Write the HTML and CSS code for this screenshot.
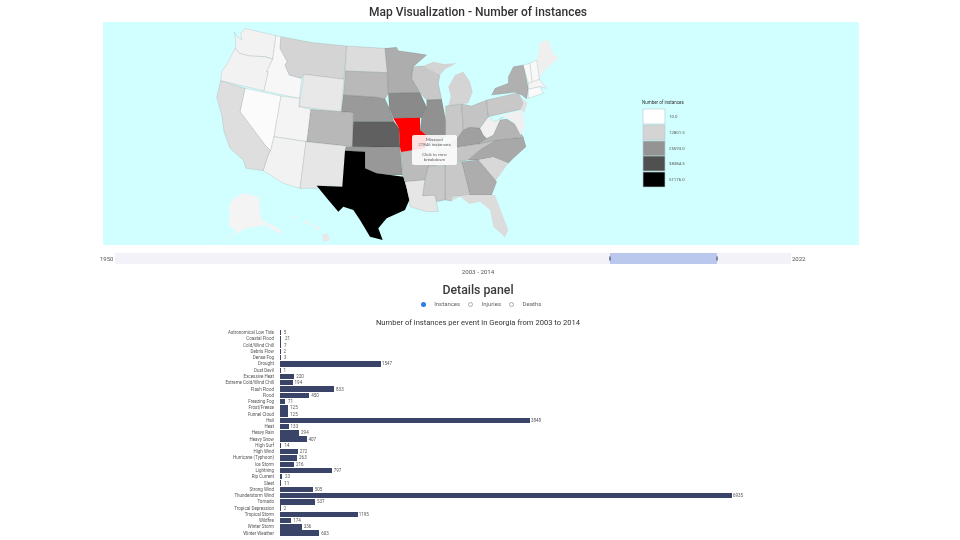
FILE: index.html
```html
<!DOCTYPE html>
<html lang="en">
<head>
    <meta charset="UTF-8">
    <title>Map Visualization</title>
    <link rel="stylesheet" href="styles.css">
</head>
<body>
<div class="page">
    <h1 class="map-title">Map Visualization - Number of instances</h1>

    <div class="map-panel">
        <svg class="map" viewBox="-291 6 2268 669">
            <g class="states">
                <polygon fill="#f2f2f2" points="103,35 112,50 125,60 122,40 135,25 228,47 218,118 195,110 150,108 118,100 105,85 108,70"/>
                <polygon fill="#f2f2f2" points="105,85 118,100 150,108 195,110 218,118 200,155 205,155 192,213 62,182 65,155 85,125"/>
                <polygon fill="#f7f7f7" points="228,47 243,50 240,85 262,125 255,135 268,165 305,175 298,235 192,213 205,155 200,155 218,118"/>
                <polygon fill="#d4d4d4" points="243,50 340,68 440,78 432,178 312,163 305,175 268,165 255,135 262,125 240,85"/>
                <polygon fill="#e8e8e8" points="312,163 432,178 423,275 297,260"/>
                <polygon fill="#dcdcdc" points="440,78 555,85 562,158 436,153"/>
                <polygon fill="#b9b9b9" points="436,153 562,158 565,220 555,237 530,232 430,225"/>
                <polygon fill="#9a9a9a" points="430,225 530,232 555,237 568,265 582,305 460,305 460,278 424,275"/>
                <polygon fill="#b8b8b8" points="332,268 460,278 457,380 320,365"/>
                <polygon fill="#606060" points="460,305 582,305 597,325 600,382 457,380"/>
                <polygon fill="#fbfbfb" points="135,205 243,228 222,350 212,392 195,375 120,275"/>
                <polygon fill="#f4f4f4" points="243,228 298,235 297,260 332,268 320,365 222,350"/>
                <polygon fill="#dedede" points="62,182 135,205 120,275 195,375 212,392 205,405 190,452 138,445 130,420 90,385 72,335 65,285 50,232"/>
                <polygon fill="#f2f2f2" points="222,350 318,365 300,505 250,490 190,452 205,405 212,392"/>
                <polygon fill="#e6e6e6" points="318,365 438,378 427,500 352,497 352,505 300,505"/>
                <polygon fill="#989898" points="438,380 600,382 607,465 570,465 530,460 495,445 495,395 435,392"/>
                <polygon class="plain" fill="#000000" points="435,392 495,395 495,445 530,460 570,465 610,470 620,505 628,540 615,570 560,595 535,625 548,660 510,650 480,600 460,570 430,560 415,575 385,540 350,497 427,500"/>
                <polygon fill="#adadad" points="555,85 590,82 595,92 650,100 680,105 640,140 635,175 660,218 565,220 562,158"/>
                <polygon fill="#8a8a8a" points="565,220 660,218 680,262 665,293 580,295 568,265"/>
                <polygon fill="#bbbbbb" points="603,396 675,385 690,395 685,440 675,480 615,485 610,470 607,465"/>
                <polygon fill="#e6e6e6" points="615,485 675,480 668,527 705,525 715,575 680,575 630,560 628,540 620,505"/>
                <polygon fill="#c8c8c8" points="640,140 670,138 720,165 715,190 725,238 680,240 660,218 635,175"/>
                <polygon class="plain" fill="#d4d4d4" points="668,138 700,125 730,132 770,130 735,148 720,165 690,150"/>
                <polygon class="plain" fill="#d4d4d4" points="745,200 765,165 790,155 810,185 818,215 805,250 745,258 752,230"/>
                <polygon fill="#919191" points="680,240 725,238 737,300 737,345 715,385 690,370 685,350 660,330 665,293 680,262"/>
                <polygon fill="#c8c8c8" points="737,258 785,252 790,330 770,358 737,375 737,345 737,300"/>
                <polygon fill="#c4c4c4" points="785,252 815,258 860,240 865,290 840,325 810,322 790,330"/>
                <polygon fill="#a0a0a0" points="737,375 770,358 790,330 810,322 840,325 850,345 860,355 835,372 750,385"/>
                <polygon fill="#c4c4c4" points="690,395 715,385 750,385 835,372 890,360 860,378 840,390 805,420 685,440"/>
                <polygon fill="#a8a8a8" points="805,420 840,390 890,360 970,352 978,380 940,415 925,430 880,412 835,420"/>
                <polygon class="plain" fill="#d8d8d8" points="835,420 880,412 925,430 885,485"/>
                <polygon fill="#adadad" points="785,425 835,420 890,485 875,525 810,525 800,485"/>
                <polygon fill="#c8c8c8" points="735,435 785,425 800,485 810,525 755,530 755,543 735,540"/>
                <polygon fill="#c8c8c8" points="685,440 735,435 735,540 710,545 705,525 668,527 675,480"/>
                <polygon class="plain" fill="#dcdcdc" points="755,530 810,525 875,525 885,525 925,630 915,652 880,620 870,570 840,545 808,552 780,530 755,543"/>
                <polygon fill="#b4b4b4" points="835,372 860,355 880,345 900,300 920,297 945,312 970,352 890,360"/>
                <polygon fill="#f0f0f0" points="840,325 865,290 885,305 910,290 900,300 880,345 860,355 850,345"/>
                <polygon fill="#c8c8c8" points="860,240 955,218 970,250 965,268 865,290"/>
                <polygon fill="#b0b0b0" points="875,225 885,205 925,190 925,170 940,140 970,135 985,205 980,237 965,225 945,217"/>
                <polygon class="plain" fill="#f0f0f0" points="905,288 965,270 975,320 962,345 945,312 925,295"/>
                <polygon class="plain" fill="#e0e0e0" points="965,232 982,250 972,280 962,268 970,250"/>
                <polygon class="plain" fill="#efefef" points="1010,120 1020,65 1045,60 1060,100 1075,115 1030,155 1018,178"/>
                <polygon fill="#f8f8f8" points="970,135 990,130 997,187 985,190"/>
                <polygon fill="#f8f8f8" points="990,130 1010,120 1018,178 997,187"/>
                <polygon fill="#f4f4f4" points="985,190 1018,178 1040,205 1020,200 985,208"/>
                <polygon fill="#fafafa" points="985,208 1020,200 1030,220 985,235"/>
                <polygon class="plain" fill="#f4f4f4" points="100,535 130,520 175,530 185,600 245,630 240,642 195,615 140,625 60,665 110,635 85,615 90,580 85,565"/>
                <polygon class="plain" fill="#e8e8e8" points="365,645 382,640 390,660 372,667"/>
                <polygon class="plain" fill="#f0f0f0" points="336,612 362,625 358,630 334,618"/>
                <polygon class="plain" fill="#f0f0f0" points="312,600 326,605 322,612 312,608"/>
                <polygon class="plain" fill="#f0f0f0" points="278,585 288,590 284,597 276,592"/>
            </g>
            <polygon class="state-active" points="580,295 660,293 660,330 685,350 680,365 675,385 603,396 600,382 597,325"/>

            <text class="legend-title" x="1326" y="253">Number of instances</text>
            <g class="legend-swatches">
                <rect x="1329" y="267" width="66" height="45" fill="#ffffff"/>
                <rect x="1329" y="315" width="66" height="45" fill="#d4d4d4"/>
                <rect x="1329" y="363" width="66" height="45" fill="#949494"/>
                <rect x="1329" y="408" width="66" height="45" fill="#505050"/>
                <rect x="1329" y="456" width="66" height="45" fill="#000000"/>
            </g>
            <g class="legend-labels">
                <text x="1407" y="294">10.0</text>
                <text x="1407" y="342">12801.5</text>
                <text x="1407" y="390">25593.0</text>
                <text x="1407" y="435">38384.5</text>
                <text x="1407" y="483">51176.0</text>
            </g>
        </svg>

        <div class="map-tooltip">
            <div>Missouri</div>
            <div>27846 instances</div>
            <div class="tooltip-gap">Click to view</div>
            <div>breakdown</div>
        </div>
    </div>

    <div class="slider">
        <span class="slider-end">1950</span>
        <div class="slider-track">
            <div class="slider-band"><i></i><i></i></div>
        </div>
        <span class="slider-end">2022</span>
    </div>
    <div class="slider-value">2003 - 2014</div>

    <h2 class="details-title">Details panel</h2>
    <form class="radios">
        <label><input type="radio" name="metric" checked>Instances</label>
        <label><input type="radio" name="metric">Injuries</label>
        <label><input type="radio" name="metric">Deaths</label>
    </form>

    <h3 class="chart-title">Number of instances per event in Georgia from 2003 to 2014</h3>
    <div class="chart">
        <div class="row tiny"><span class="name">Astronomical Low Tide</span><span class="bar" style="width:0.3px"></span><span class="val">5</span></div>
        <div class="row tiny"><span class="name">Coastal Flood</span><span class="bar" style="width:1.4px"></span><span class="val">21</span></div>
        <div class="row tiny"><span class="name">Cold/Wind Chill</span><span class="bar" style="width:0.5px"></span><span class="val">7</span></div>
        <div class="row tiny"><span class="name">Debris Flow</span><span class="bar" style="width:0.1px"></span><span class="val">2</span></div>
        <div class="row tiny"><span class="name">Dense Fog</span><span class="bar" style="width:0.2px"></span><span class="val">3</span></div>
        <div class="row wide"><span class="name">Drought</span><span class="bar" style="width:101px"></span><span class="val">1547</span></div>
        <div class="row tiny"><span class="name">Dust Devil</span><span class="bar" style="width:0.1px"></span><span class="val">1</span></div>
        <div class="row"><span class="name">Excessive Heat</span><span class="bar" style="width:14.3px"></span><span class="val">220</span></div>
        <div class="row"><span class="name">Extreme Cold/Wind Chill</span><span class="bar" style="width:12.6px"></span><span class="val">194</span></div>
        <div class="row"><span class="name">Flash Flood</span><span class="bar" style="width:54.1px"></span><span class="val">833</span></div>
        <div class="row"><span class="name">Flood</span><span class="bar" style="width:29.3px"></span><span class="val">450</span></div>
        <div class="row tiny"><span class="name">Freezing Fog</span><span class="bar" style="width:4.6px"></span><span class="val">71</span></div>
        <div class="row"><span class="name">Frost/Freeze</span><span class="bar" style="width:8.1px"></span><span class="val">125</span></div>
        <div class="row"><span class="name">Funnel Cloud</span><span class="bar" style="width:8.1px"></span><span class="val">125</span></div>
        <div class="row wide"><span class="name">Hail</span><span class="bar" style="width:250px"></span><span class="val">3848</span></div>
        <div class="row"><span class="name">Heat</span><span class="bar" style="width:8.6px"></span><span class="val">133</span></div>
        <div class="row"><span class="name">Heavy Rain</span><span class="bar" style="width:19.1px"></span><span class="val">294</span></div>
        <div class="row"><span class="name">Heavy Snow</span><span class="bar" style="width:26.5px"></span><span class="val">407</span></div>
        <div class="row tiny"><span class="name">High Surf</span><span class="bar" style="width:0.9px"></span><span class="val">14</span></div>
        <div class="row"><span class="name">High Wind</span><span class="bar" style="width:17.7px"></span><span class="val">272</span></div>
        <div class="row"><span class="name">Hurricane (Typhoon)</span><span class="bar" style="width:17.1px"></span><span class="val">263</span></div>
        <div class="row"><span class="name">Ice Storm</span><span class="bar" style="width:14px"></span><span class="val">216</span></div>
        <div class="row"><span class="name">Lightning</span><span class="bar" style="width:51.8px"></span><span class="val">797</span></div>
        <div class="row tiny"><span class="name">Rip Current</span><span class="bar" style="width:1.5px"></span><span class="val">23</span></div>
        <div class="row tiny"><span class="name">Sleet</span><span class="bar" style="width:0.7px"></span><span class="val">11</span></div>
        <div class="row"><span class="name">Strong Wind</span><span class="bar" style="width:32.8px"></span><span class="val">505</span></div>
        <div class="row wide"><span class="name">Thunderstorm Wind</span><span class="bar" style="width:452px"></span><span class="val">6935</span></div>
        <div class="row"><span class="name">Tornado</span><span class="bar" style="width:34.9px"></span><span class="val">537</span></div>
        <div class="row tiny"><span class="name">Tropical Depression</span><span class="bar" style="width:0.1px"></span><span class="val">2</span></div>
        <div class="row wide"><span class="name">Tropical Storm</span><span class="bar" style="width:77.7px"></span><span class="val">1195</span></div>
        <div class="row"><span class="name">Wildfire</span><span class="bar" style="width:11.3px"></span><span class="val">174</span></div>
        <div class="row"><span class="name">Winter Storm</span><span class="bar" style="width:21.8px"></span><span class="val">336</span></div>
        <div class="row"><span class="name">Winter Weather</span><span class="bar" style="width:39.2px"></span><span class="val">603</span></div>
    </div>
</div>
</body>
</html>
```

FILE: styles.css
```css
html, body {
    margin: 0;
    padding: 0;
    height: 540px;
    overflow: hidden;
    background: #fff;
}

.page {
    width: 956px;
    font-family: Roboto, "Liberation Sans", sans-serif;
    color: #444;
    filter: blur(0.5px);
}

.map-title {
    margin: 0;
    height: 22px;
    line-height: 24px;
    text-align: center;
    font-size: 12px;
    font-weight: 500;
    color: #333;
}

.map-panel {
    position: relative;
    width: 756px;
    height: 223px;
    margin-left: 103px;
    background: #d1ffff;
}

.map {
    display: block;
    width: 756px;
    height: 223px;
    filter: blur(0.4px);
}

.states polygon {
    stroke: rgba(0, 0, 0, 0.18);
    stroke-width: 1.5;
    stroke-linejoin: round;
}

.states .plain {
    stroke: none;
}

.state-active {
    fill: #ff0000;
}

.legend-title {
    font-size: 13.5px;
    fill: #333;
}

.legend-swatches rect {
    stroke: #b5cfcf;
    stroke-width: 2;
}

.legend-labels text {
    font-size: 13px;
    fill: #555;
}

.map-tooltip {
    position: absolute;
    left: 309px;
    top: 113px;
    width: 45px;
    height: 30px;
    box-sizing: border-box;
    padding-top: 2px;
    background: rgba(255, 255, 255, 0.88);
    border-radius: 2px;
    text-align: center;
    font-size: 4.4px;
    line-height: 5px;
    color: #666;
}

.tooltip-gap {
    margin-top: 5px;
}

.slider {
    display: flex;
    align-items: center;
    height: 11px;
    margin: 8px 0 0 100px;
    width: 706px;
}

.slider-end {
    font-size: 6px;
    color: #555;
    width: 14px;
}

.slider-end:first-child {
    width: 15px;
}

.slider-end:last-child {
    padding-left: 1px;
}

.slider-track {
    flex: 1;
    height: 11px;
    padding-left: 495px;
    box-sizing: border-box;
    background: #f2f2f8;
}

.slider-band {
    position: relative;
    width: 107px;
    height: 11px;
    background: #b9c8ec;
}

.slider-band i {
    position: absolute;
    top: 3px;
    left: -1px;
    width: 2px;
    height: 5px;
    border-radius: 50%;
    background: #6f7f9f;
}

.slider-band i:last-child {
    left: auto;
    right: -1px;
}

.slider-value {
    margin-top: 4px;
    height: 8px;
    line-height: 8px;
    text-align: center;
    font-size: 6.2px;
    color: #555;
}

.details-title {
    margin: 7px 0 0;
    height: 14px;
    line-height: 14px;
    text-align: center;
    font-size: 12.3px;
    font-weight: 500;
    color: #3a3a3a;
}

.radios {
    display: flex;
    justify-content: center;
    gap: 8px;
    margin-top: 3px;
    padding-left: 6px;
    height: 8px;
    font-size: 6px;
    line-height: 8px;
    color: #666;
}

.radios label {
    display: flex;
    align-items: center;
}

.radios input {
    appearance: none;
    width: 5px;
    height: 5px;
    margin: 0 8.5px 0 0;
    border: 0.5px solid #aaa;
    border-radius: 50%;
    box-sizing: border-box;
}

.radios input:checked {
    border: none;
    background: #2a7fe8;
}

.chart-title {
    margin: 9.5px 0 0;
    height: 10px;
    line-height: 10px;
    text-align: center;
    font-size: 7.6px;
    font-weight: 400;
    color: #333;
}

.chart {
    margin-top: 2px;
}

.row {
    display: flex;
    align-items: center;
    height: 6.28px;
    font-size: 4.5px;
}

.name {
    width: 274px;
    text-align: right;
    margin-right: 6px;
    color: #555;
    white-space: nowrap;
}

.bar {
    height: 5.4px;
    background: #3a4468;
}

.val {
    margin-left: 2px;
    color: #555;
}

.tiny .val {
    margin-left: 3.5px;
}

.wide .val {
    margin-left: 1px;
}
```
